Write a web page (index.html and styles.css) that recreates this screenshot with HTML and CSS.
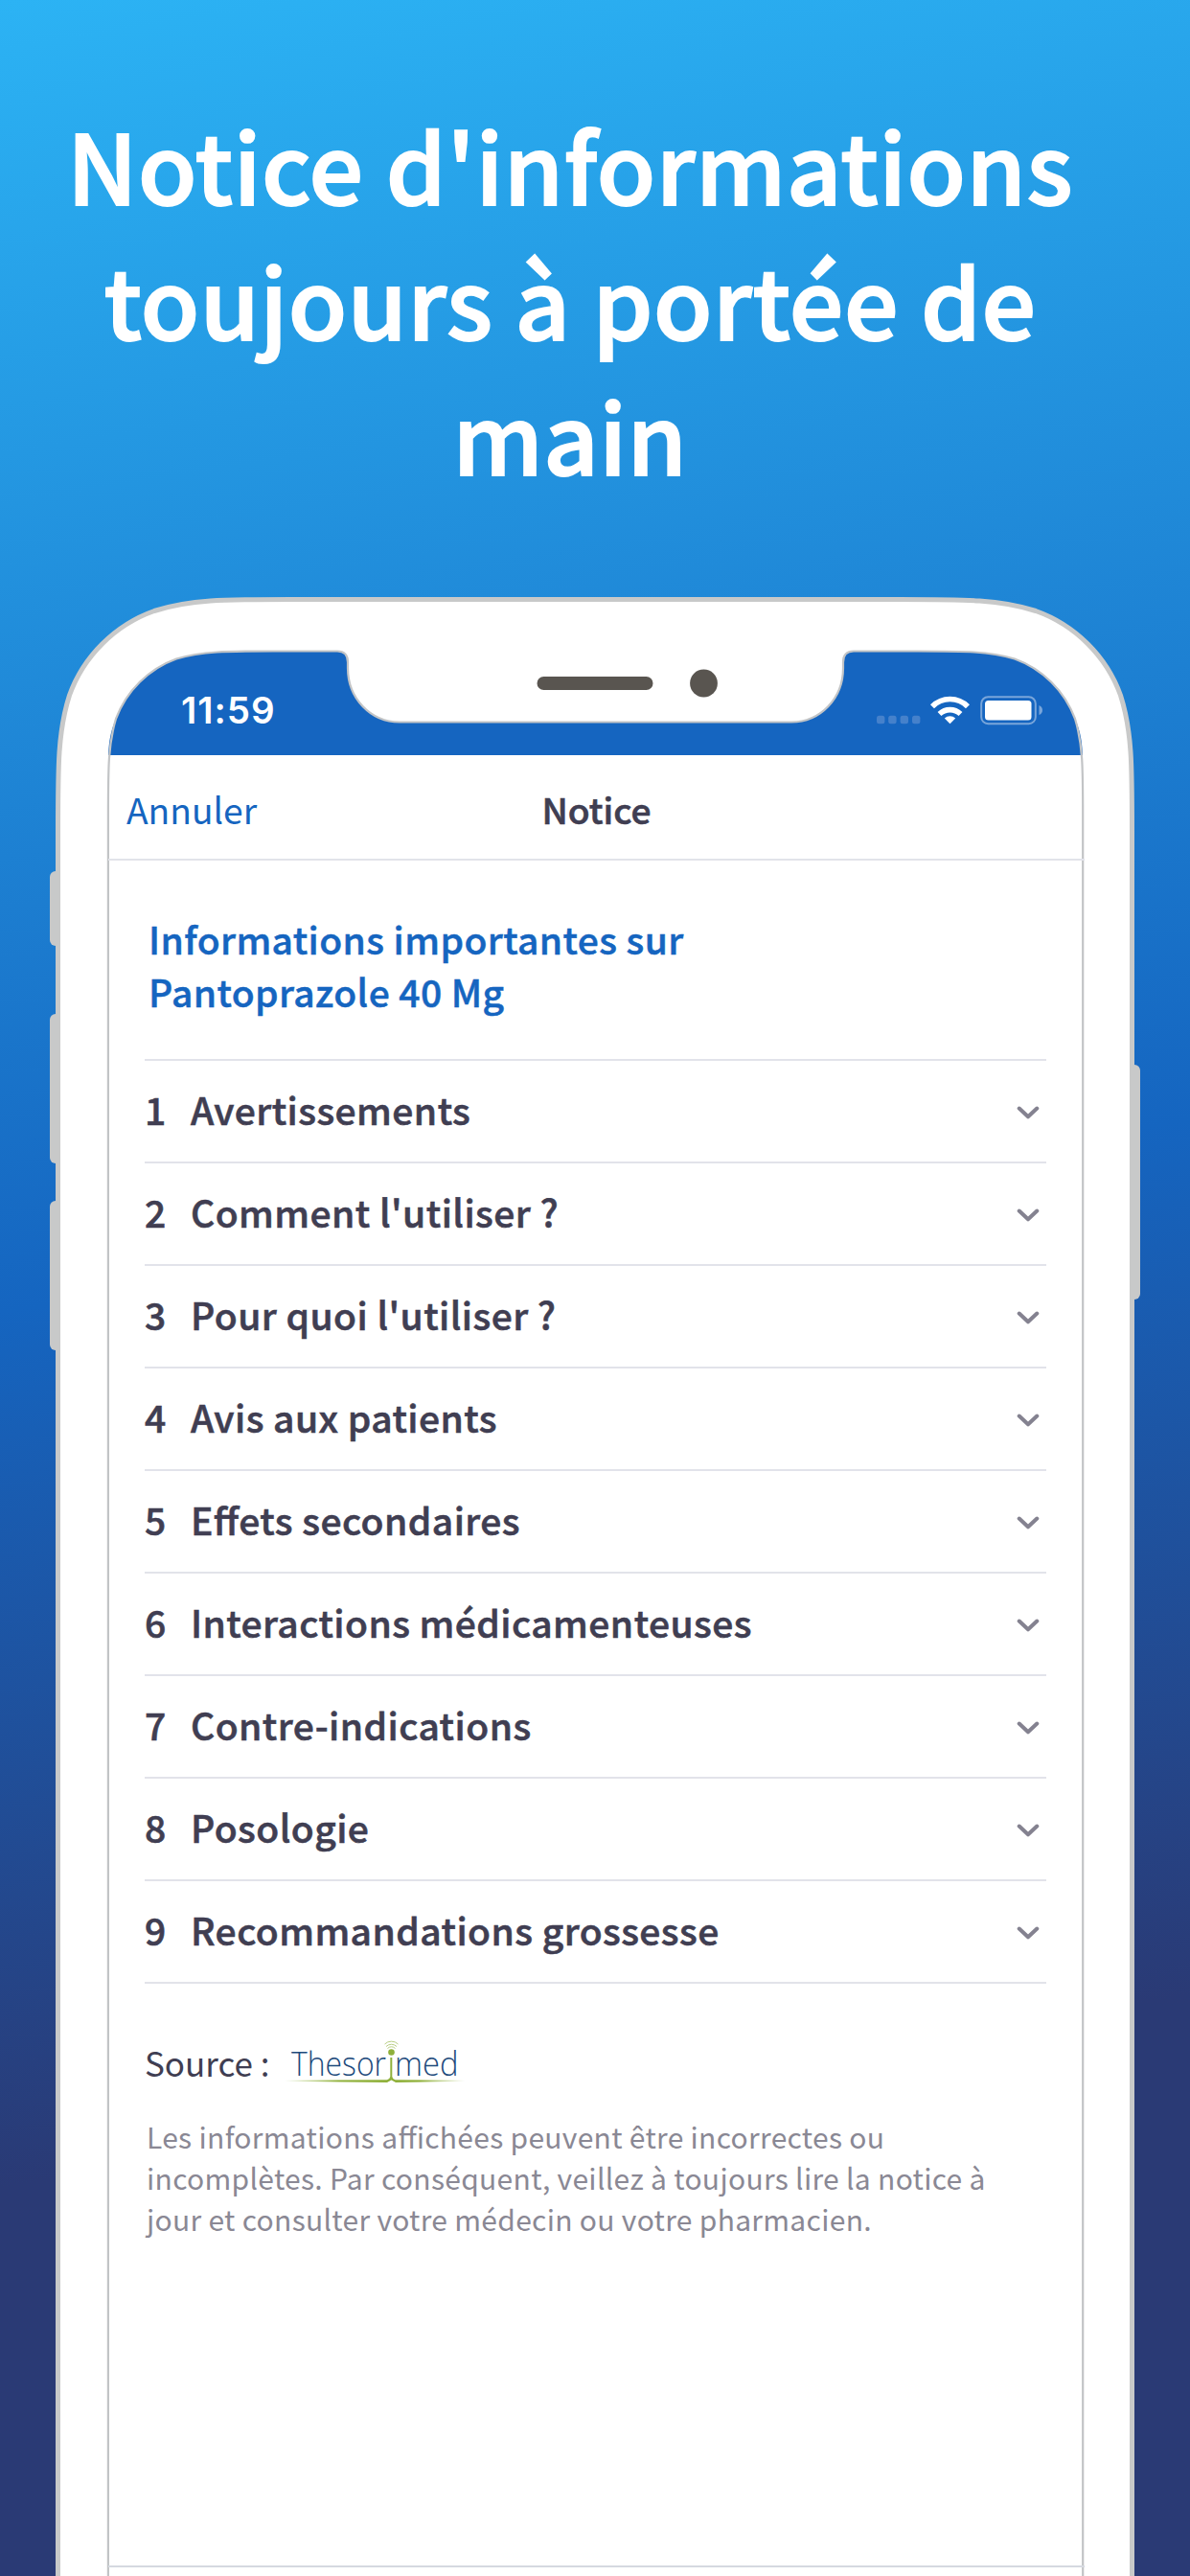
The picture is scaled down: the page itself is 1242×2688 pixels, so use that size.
FILE: index.html
```html
<!DOCTYPE html>
<html lang="fr">
<head>
    <meta charset="UTF-8">
    <meta name="viewport" content="width=device-width, initial-scale=1.0">
    <title>Notice d'informations</title>
    <link rel="stylesheet" href="styles.css">
</head>
<body>
    <h1>Notice d'informations toujours à portée de main</h1>

    <div class="phone">
        <svg class="frame" width="1138" height="2065" viewBox="52 623 1138 2065">
            <!-- side buttons -->
            <g fill="#c8c9c9">
                <rect x="52" y="909" width="20" height="78" rx="6"/>
                <rect x="52" y="1058" width="20" height="156" rx="6"/>
                <rect x="52" y="1253" width="20" height="156" rx="6"/>
                <rect x="1170" y="1111" width="20" height="245" rx="6"/>
            </g>
            <!-- body -->
            <path fill="#fff" stroke="#c8c9c9" stroke-width="5" d="M60.5 2700V868C60.5 798 60.5 763 72.500 725.500C87 685 120 652 161 637.500C198 625.500 233 625.500 303 625.500H939C1009 625.500 1044 625.500 1081 637.500C1122 652 1155 685 1169.500 725.500C1181.500 763 1181.500 798 1181.500 868V2700"/>
            <!-- status bar with notch -->
            <path fill="#1565c0" d="M113 788C114 770 116 762 121 750C132 721 155 698 184 687.500C211 679.500 236 679.500 285 679.500H352Q363 679.500 363 691V697C363 729 387 753.500 417 753.500H826C856 753.500 880 729 880 697V691Q880 679.500 891 679.500H958C1007 679.500 1032 679.500 1059 687.500C1088 698 1111 721 1122 750C1127 762 1129 770 1130 788Z"/>
            <path fill="none" stroke="#c2c4c6" stroke-width="2.200" d="M112.900 2700V850C112.900 801 112.900 777 121 750C132 721 155 698 184 687.500C211 679.500 236 679.500 285 679.500H352Q363 679.500 363 691V697C363 729 387 753.500 417 753.500H826C856 753.500 880 729 880 697V691Q880 679.500 891 679.500H958C1007 679.500 1032 679.500 1059 687.500C1088 698 1111 721 1122 750C1130.200 777 1130.200 801 1130.200 850V2700"/>
            <rect x="560.500" y="706" width="121" height="14" rx="7" fill="#595550"/>
            <circle cx="734.500" cy="713" r="14.400" fill="#595550"/>
        </svg>

        <div class="screen">
            <div class="status">
                <span class="time">11:59</span>
                <svg width="174" height="32" viewBox="915 725 174 32">
                    <g fill="#4581cb">
                        <rect x="915" y="746.800" width="8.400" height="8.400" rx="2.500"/>
                        <rect x="927.200" y="746.800" width="8.400" height="8.400" rx="2.500"/>
                        <rect x="939.600" y="746.800" width="8.400" height="8.400" rx="2.500"/>
                        <rect x="952" y="746.800" width="8.400" height="8.400" rx="2.500"/>
                    </g>
                    <g fill="none" stroke="#fff" stroke-width="5.600">
                        <path d="M973 737.300A26 26 0 0 1 1010 737.300"/>
                        <path d="M980.500 745A16 16 0 0 1 1002.500 745"/>
                    </g>
                    <path fill="#fff" d="M991.500 755.200L985.800 749.500A8.500 8.500 0 0 1 997.200 749.500Z"/>
                    <rect x="1024.200" y="727.200" width="56.600" height="28" rx="7" fill="none" stroke="#78a5da" stroke-width="2"/>
                    <rect x="1028" y="731" width="48.500" height="20.500" rx="3.500" fill="#fff"/>
                    <path fill="#78a5da" d="M1084.500 736Q1088 737.500 1088 741T1084.500 746Z"/>
                </svg>
            </div>
            <div class="nav">
                <a>Annuler</a>
                <b>Notice</b>
                <span></span>
            </div>
            <div class="content">
                <h2>Informations importantes sur<br>Pantoprazole 40 Mg</h2>
                <ul id="sections"></ul>
                <div class="source">
                    <span>Source :</span>
                    <svg width="190" height="50" viewBox="296 2127 190 50">
                        <defs>
                            <linearGradient id="green">
                                <stop offset="0" stop-color="#8fb03a" stop-opacity="0"/>
                                <stop offset=".3" stop-color="#8fb03a"/>
                                <stop offset=".75" stop-color="#8fb03a"/>
                                <stop offset="1" stop-color="#8fb03a" stop-opacity="0"/>
                            </linearGradient>
                        </defs>
                        <g class="logo">
                            <text x="304" y="2166.500" textLength="99" lengthAdjust="spacingAndGlyphs">Thesor</text>
                            <text x="412" y="2166.500" textLength="66.500" lengthAdjust="spacingAndGlyphs">med</text>
                        </g>
                        <path fill="url(#green)" d="M297 2171.700L404 2171.300Q406.500 2171 407.300 2168V2148H409.300V2168Q410 2171 412.500 2171.300L485 2171.700V2172.700L413 2174L408.500 2171.500L404 2174L297 2172.700Z"/>
                        <circle cx="408.500" cy="2142.500" r="3.300" fill="#8fb03a"/>
                        <g fill="none" stroke="#b9cf85" stroke-width="1">
                            <path d="M404.500 2138.500A5.500 5.500 0 0 1 412.500 2138.500"/>
                            <path d="M403 2136.500A7.800 7.800 0 0 1 414 2136.500"/>
                            <path d="M401.500 2134A10 10 0 0 1 415.500 2134"/>
                        </g>
                    </svg>
                </div>
                <p>Les informations affichées peuvent être incorrectes ou<br>incomplètes. Par conséquent, veillez à toujours lire la notice à<br>jour et consulter votre médecin ou votre pharmacien.</p>
            </div>
            <div class="tabbar"></div>
        </div>
    </div>

    <script>
        const sections = [
            "Avertissements",
            "Comment l'utiliser ?",
            "Pour quoi l'utiliser ?",
            "Avis aux patients",
            "Effets secondaires",
            "Interactions médicamenteuses",
            "Contre-indications",
            "Posologie",
            "Recommandations grossesse"
        ];

        const chevron = '<svg width="24" height="14" viewBox="0 0 24 14"><path d="M2.700 2.500L12 11.300L21.300 2.500"/></svg>';

        document.getElementById("sections").innerHTML = sections.map((name, i) =>
            `<li><span class="num">${i + 1}</span><span class="name">${name}</span>${chevron}</li>`
        ).join("");
    </script>
</body>
</html>
```
FILE: styles.css
```css
* {
    box-sizing: border-box;
}
body {
    margin: 0;
    width: 1242px;
    height: 2688px;
    overflow: hidden;
    font-family: "Noto Sans CJK JP", "Noto Sans", sans-serif;
    font-feature-settings: "liga" 1;
    color: #403e52;
    background: linear-gradient(170.8deg, #2cb3f4 0%, #1565c0 47.4%, #2a3a75 79%);
}
h1 {
    margin: 0;
    width: 1190px;
    height: 623px;
    padding: 100px 40px 0;
    font-size: 100px;
    font-weight: 500;
    line-height: 141px;
    letter-spacing: 0.5px;
    text-align: center;
    color: #fff;
    -webkit-text-stroke: 2px #fff;
}
.phone {
    position: relative;
    width: 1138px;
    height: 2065px;
    margin-left: 52px;
    padding: 55px 58px 0 61px;
}
.frame {
    position: absolute;
    top: 0;
    left: 0;
}
.screen {
    position: relative;
    height: 2010px;
    display: flex;
    flex-direction: column;
}
.status {
    height: 110px;
    padding: 47px 43px 0 76px;
    display: flex;
    justify-content: space-between;
}
.time {
    font-family: Inter, sans-serif;
    font-size: 38.5px;
    font-weight: 600;
    line-height: 32px;
    letter-spacing: 1px;
    color: #fff;
}
.nav {
    height: 110px;
    padding: 3px 19px 0;
    display: grid;
    grid-template-columns: 1fr auto 1fr;
    align-items: center;
    font-size: 37.2px;
    border-bottom: 2px solid #e2e3ea;
}
.nav a {
    color: #1565c0;
}
.nav b {
    font-weight: 500;
    -webkit-text-stroke: 0.6px #403e52;
}
.content {
    flex: 1;
    padding: 54px 40px 0 38px;
}
h2 {
    margin: 0;
    height: 153px;
    padding-left: 4px;
    font-size: 39px;
    font-weight: 500;
    line-height: 55px;
    letter-spacing: 0.4px;
    color: #1565c0;
    -webkit-text-stroke: 0.5px #1565c0;
}
ul {
    margin: 0;
    padding: 0;
    list-style: none;
    border-top: 2px solid #e2e3ea;
}
li {
    height: 107px;
    display: flex;
    align-items: center;
    padding-right: 7px;
    font-size: 39px;
    font-weight: 500;
    letter-spacing: 0.45px;
    -webkit-text-stroke: 0.6px #403e52;
    border-bottom: 2px solid #e2e3ea;
}
.num, .name {
    padding-bottom: 5px;
}
.num {
    width: 48px;
}
.name {
    flex: 1;
}
li svg {
    margin-top: 2px;
}
li path {
    fill: none;
    stroke: #848290;
    stroke-width: 4;
    stroke-linecap: round;
    stroke-linejoin: round;
}
.source {
    height: 108px;
    display: flex;
    align-items: center;
    padding-top: 54px;
    gap: 15px;
    font-size: 35px;
}
.logo {
    font-family: "Open Sans", sans-serif;
    font-size: 34px;
    font-weight: 300;
    fill: #1d4a7c;
}
p {
    margin: 30px 0 0;
    padding-left: 2px;
    font-size: 30px;
    line-height: 43px;
    letter-spacing: 0.3px;
    color: #8a8894;
}
.tabbar {
    height: 11px;
    border-top: 2px solid #d5d9e0;
}
```
